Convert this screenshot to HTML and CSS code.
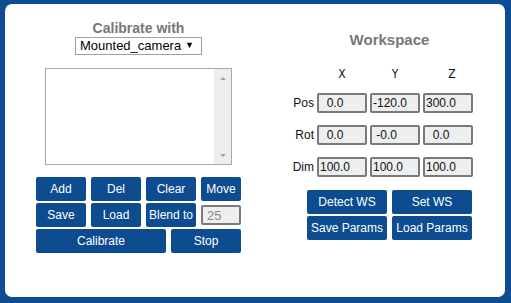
FILE: index.html
```html
<!DOCTYPE html>
<html>
<head>
<meta charset="utf-8">
<title>Calibration</title>
<link rel="stylesheet" href="styles.css">
</head>
<body>
<div class="panel">
  <section class="calib">
    <h2 class="title">Calibrate with</h2>
    <div class="select-wrap">
      <select class="select"><option>Mounted_camera</option></select>
    </div>
    <div class="textbox">
      <textarea class="log"></textarea>
      <div class="vscroll"><span class="arrow up"></span><span class="arrow down"></span></div>
    </div>
    <div class="btn-rows">
      <div class="row">
        <button class="btn w50">Add</button>
        <button class="btn w50">Del</button>
        <button class="btn w50">Clear</button>
        <button class="btn w40">Move</button>
      </div>
      <div class="row">
        <button class="btn w50">Save</button>
        <button class="btn w50">Load</button>
        <button class="btn w50">Blend to</button>
        <input class="blend" type="text" value="25" disabled>
      </div>
      <div class="row">
        <button class="btn w130">Calibrate</button>
        <button class="btn w70">Stop</button>
      </div>
    </div>
  </section>
  <section class="workspace">
    <h2 class="ws-title">Workspace</h2>
    <div class="ws-grid">
      <span></span><span class="axis">X</span><span class="axis">Y</span><span class="axis axis-z">Z</span>
      <span class="rlabel">Pos</span>
      <input class="num" type="text" value="  0.0">
      <input class="num" type="text" value="-120.0">
      <input class="num" type="text" value="300.0">
      <span class="rlabel">Rot</span>
      <input class="num" type="text" value="  0.0">
      <input class="num" type="text" value=" -0.0">
      <input class="num" type="text" value="  0.0">
      <span class="rlabel">Dim</span>
      <input class="num" type="text" value="100.0">
      <input class="num" type="text" value="100.0">
      <input class="num" type="text" value="100.0">
    </div>
    <div class="ws-btns">
      <button class="btn">Detect WS</button>
      <button class="btn">Set WS</button>
      <button class="btn">Save Params</button>
      <button class="btn">Load Params</button>
    </div>
  </section>
</div>
</body>
</html>
```
FILE: styles.css
```css
html, body {
  margin: 0;
  padding: 0;
  height: 100%;
}
body {
  background: #0e4c92;
  overflow: hidden;
  font-family: "Liberation Sans", Arial, sans-serif;
}
.panel {
  margin: 4px 6px 6px 5px;
  width: 500px;
  height: 293px;
  background: #fff;
  border-radius: 7px;
  display: flex;
}
.calib {
  width: 205px;
  padding: 17px 0 0 31px;
  display: flex;
  flex-direction: column;
  align-items: center;
}
.title {
  margin: 0;
  font-size: 14px;
  line-height: 15px;
  font-weight: bold;
  color: #777;
}
.select-wrap {
  position: relative;
  width: 127px;
  height: 18px;
}
.select-wrap::after {
  content: "\25BC";
  position: absolute;
  right: 8px;
  top: 4px;
  font-size: 9px;
  line-height: 10px;
  color: #000;
  pointer-events: none;
}
.select {
  -webkit-appearance: none;
  appearance: none;
  box-sizing: border-box;
  width: 127px;
  height: 18px;
  margin: 0;
  padding: 0 0 0 4px;
  border: 1px solid #a0a0a0;
  border-radius: 0;
  background: #fff;
  font-family: "Liberation Sans", Arial, sans-serif;
  font-size: 13px;
  line-height: 16px;
  color: #000;
}
.textbox {
  margin-top: 14px;
  width: 187px;
  height: 97px;
  box-sizing: border-box;
  border: 1px solid #a9a9a9;
  display: flex;
}
.log {
  flex: 1;
  border: none;
  margin: 0;
  padding: 2px;
  resize: none;
  outline: none;
  background: #fff;
}
.vscroll {
  width: 17px;
  background: #efecec;
  display: flex;
  flex-direction: column;
  justify-content: space-between;
  align-items: center;
  padding: 8px 0 7px;
}
.arrow {
  width: 0;
  height: 0;
  border-left: 3.5px solid transparent;
  border-right: 3.5px solid transparent;
}
.arrow.up { border-bottom: 3px solid #a3a3a3; }
.arrow.down { border-top: 3px solid #a3a3a3; }
.btn-rows {
  margin-top: 12px;
  display: flex;
  flex-direction: column;
  gap: 2px;
  width: 205px;
}
.row {
  display: flex;
  gap: 5px;
  align-items: center;
  height: 24px;
}
.btn {
  height: 24px;
  margin: 0;
  padding: 0;
  border: none;
  border-radius: 2px;
  background: #0e4c92;
  color: #fff;
  font-family: "Liberation Sans", Arial, sans-serif;
  font-size: 12px;
  line-height: 24px;
  text-align: center;
}
.w50 { width: 50px; }
.w40 { width: 40px; }
.w130 { width: 130px; }
.w70 { width: 70px; }
.blend {
  box-sizing: border-box;
  width: 40px;
  height: 20px;
  margin: 0;
  padding: 0 0 0 4px;
  border: 2px solid #7a7a7a;
  border-radius: 2px;
  background: #eceeef;
  color: #8a8a8a;
  font-family: "Liberation Sans", Arial, sans-serif;
  font-size: 13px;
}
.workspace {
  padding: 27px 0 0 49px;
  display: flex;
  flex-direction: column;
}
.ws-title {
  margin: 0 0 0 17px;
  width: 165px;
  text-align: center;
  font-size: 15px;
  line-height: 17px;
  font-weight: bold;
  color: #777;
}
.ws-grid {
  margin-top: 20px;
  display: grid;
  grid-template-columns: 24px 50px 50px 50px;
  grid-template-rows: 13px 20px 20px 20px;
  column-gap: 3px;
  row-gap: 12px;
  align-items: center;
}
.axis {
  text-align: center;
  font-family: "Liberation Sans Narrow", "DejaVu Sans Condensed", "Liberation Sans", sans-serif;
  font-stretch: condensed;
  font-size: 12px;
  line-height: 13px;
  color: #111;
}
.axis-z { padding-left: 8px; }
.rlabel {
  justify-self: end;
  font-size: 12px;
  color: #111;
  white-space: nowrap;
}
.num {
  box-sizing: border-box;
  width: 50px;
  height: 20px;
  margin: 0;
  padding: 0 6px 0 1px;
  border: 2px solid #7a7a7a;
  border-radius: 2px;
  background: #eceeef;
  color: #111;
  font-family: "Liberation Sans", Arial, sans-serif;
  font-size: 12px;
  white-space: pre;
}
.ws-btns {
  margin: 13px 0 0 17px;
  display: grid;
  grid-template-columns: 80px 80px;
  grid-auto-rows: 24px;
  column-gap: 5px;
  row-gap: 2px;
}
```
